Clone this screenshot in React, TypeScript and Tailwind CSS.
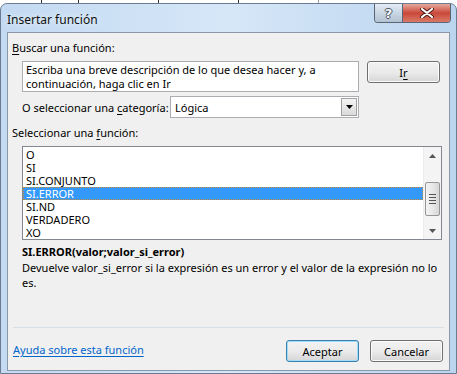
import { ReactNode } from 'react';

const items = ['O', 'SI', 'SI.CONJUNTO', 'SI.ERROR', 'SI.ND', 'VERDADERO', 'XO'];

function U({ children }: { children: ReactNode }) {
    return <span className="underline underline-offset-2">{children}</span>;
}

function Button({ label, focused }: { label: ReactNode; focused?: boolean }) {
    return (
        <div
            className={`w-[73px] h-[22px] rounded-[3px] border flex items-center justify-center text-black bg-gradient-to-b from-[#f2f2f2] via-[#ebebeb] to-[#d6d6d6] ${
                focused ? 'border-[#3c7fb1] shadow-[inset_0_0_0_1px_#9fdcf8]' : 'border-[#707070] shadow-[inset_0_0_0_1px_#fbfbfb]'
            }`}
        >
            {label}
        </div>
    );
}

function Scrollbar() {
    return (
        <div className="w-[18px] h-full bg-[#f4f4f4] border-l border-[#ececec] flex flex-col items-center">
            <div className="h-[17px] w-full flex items-center justify-center">
                <svg width="7" height="4" viewBox="0 0 7 4"><path d="M3.5 0L7 4H0z" fill="#555" /></svg>
            </div>
            <div className="h-[18px]" />
            <div className="w-[15px] h-[34px] rounded-[2px] border border-[#969696] bg-gradient-to-r from-[#f3f3f3] via-[#e8e8e8] to-[#d6d6d6] flex flex-col items-center justify-center gap-[2px]">
                <div className="w-[7px] h-[1px] bg-[#555]" />
                <div className="w-[7px] h-[1px] bg-[#555]" />
                <div className="w-[7px] h-[1px] bg-[#555]" />
                <div className="w-[7px] h-[1px] bg-[#555]" />
            </div>
            <div className="flex-1" />
            <div className="h-[17px] w-full flex items-center justify-center">
                <svg width="7" height="4" viewBox="0 0 7 4"><path d="M0 0H7L3.5 4z" fill="#555" /></svg>
            </div>
        </div>
    );
}

export default function App() {
    return (
        <div className="w-[457px] h-[374px] bg-white overflow-hidden flex flex-col font-['Noto_Sans',sans-serif] text-[11px] leading-[15px] text-black">
            {/* sheet behind the dialog */}
            <div className="h-[3px] flex">
                <div className="w-[42px] border-r border-[#333]" />
                <div className="w-[37px] border-r border-[#333]" />
                <div className="w-[80px] border-r border-[#333]" />
                <div className="w-[80px] border-r border-[#333]" />
                <div className="w-[80px] border-r border-[#999]" />
            </div>

            <div className="flex-1 flex flex-col rounded-t-[7px] border border-[#6b7c92] bg-gradient-to-r from-[#c3daf2] via-[#d6e7f8] to-[#bcd5ef] px-[6px] pb-[2px]">
                <div className="h-[28px] flex items-start justify-between">
                    <span className="pt-[8px] text-[12px] text-[#111] [text-shadow:0_0_6px_#fff]">Insertar función</span>
                    <div className="flex h-[19px] mr-[-1px] rounded-b-[4px] border border-t-0 border-[#5a6678] overflow-hidden">
                        <div className="w-[28px] flex items-center justify-center bg-gradient-to-b from-[#e4ecf4] via-[#c9d6e3] to-[#b3c2d2] border-r border-[#5a6678]">
                            <span className="font-['DejaVu_Sans',sans-serif] font-bold text-[13px] leading-[13px] text-[#f4f7fa] [text-shadow:1px_0_0_#4a5566,-1px_0_0_#4a5566,0_1px_0_#4a5566,0_-1px_0_#4a5566]">
                                ?
                            </span>
                        </div>
                        <div className="w-[47px] flex items-center justify-center bg-gradient-to-b from-[#e6a89c] via-[#c9473a] to-[#d97866]">
                            <svg width="14" height="10" viewBox="0 0 14 10">
                                <path d="M2 1L12 9M12 1L2 9" stroke="#4a1a14" strokeWidth="4" strokeLinecap="round" />
                                <path d="M2 1L12 9M12 1L2 9" stroke="#fff" strokeWidth="2.2" strokeLinecap="round" />
                            </svg>
                        </div>
                    </div>
                </div>

                <div className="flex-1 bg-[#f0f0f0] border border-[#8a97a8] flex flex-col px-[4px]">
                    <div className="mt-[7px]">
                        <U>B</U>uscar una función:
                    </div>
                    <div className="mt-[6px] ml-[10px] flex items-start gap-[8px]">
                        <div className="w-[337px] h-[31px] bg-white border border-[#abadb3] px-[3px] pt-[1px] leading-[14px]">
                            Escriba una breve descripción de lo que desea hacer y, a
                            <br />
                            continuación, haga clic en Ir
                        </div>
                        <Button label={<span>I<U>r</U></span>} />
                    </div>
                    <div className="mt-[4px] ml-[10px] flex items-center">
                        <span className="w-[148px] whitespace-nowrap">
                            O seleccionar una <U>c</U>ategoría:
                        </span>
                        <div className="w-[189px] h-[22px] bg-white border border-[#abadb3] flex items-center pl-[4px]">
                            <span className="flex-1">Lógica</span>
                            <div className="w-[16px] h-[18px] mr-[1px] border border-[#a0a0a0] bg-gradient-to-b from-[#f4f4f4] to-[#dadada] flex items-center justify-center">
                                <svg width="7" height="4" viewBox="0 0 7 4"><path d="M0 0H7L3.5 4z" fill="#000" /></svg>
                            </div>
                        </div>
                    </div>
                    <div className="mt-[7px]">
                        Seleccionar una <U>f</U>unción:
                    </div>
                    <div className="mt-[6px] ml-[10px] w-[420px] h-[94px] bg-white border border-[#828790] flex">
                        <div className="flex-1 pt-[1px]">
                            {items.map((item) => (
                                <div
                                    key={item}
                                    className={`h-[13px] leading-[13px] pl-[3px] ${
                                        item === 'SI.ERROR' ? 'bg-[#3399ff] text-white outline-1 outline-dotted outline-[#c88a3a] -outline-offset-1' : ''
                                    }`}
                                >
                                    {item}
                                </div>
                            ))}
                        </div>
                        <Scrollbar />
                    </div>
                    <div className="mt-[4px] ml-[10px] font-bold">SI.ERROR(valor;valor_si_error)</div>
                    <div className="mt-[1px] ml-[10px] w-[425px]">
                        Devuelve valor_si_error si la expresión es un error y el valor de la expresión no lo
                        <br />
                        es.
                    </div>
                    <div className="flex-1" />
                    <div className="h-px bg-[#d5dfe5] mx-[1px]" />
                    <div className="h-[42px] flex items-start pt-[12px]">
                        <span className="text-[#0066cc] underline underline-offset-2 ml-[1px] mt-[2px]">Ayuda sobre esta función</span>
                        <div className="flex-1" />
                        <div className="flex gap-[11px] mr-[2px]">
                            <Button label="Aceptar" focused />
                            <Button label="Cancelar" />
                        </div>
                    </div>
                </div>
            </div>
        </div>
    );
}
